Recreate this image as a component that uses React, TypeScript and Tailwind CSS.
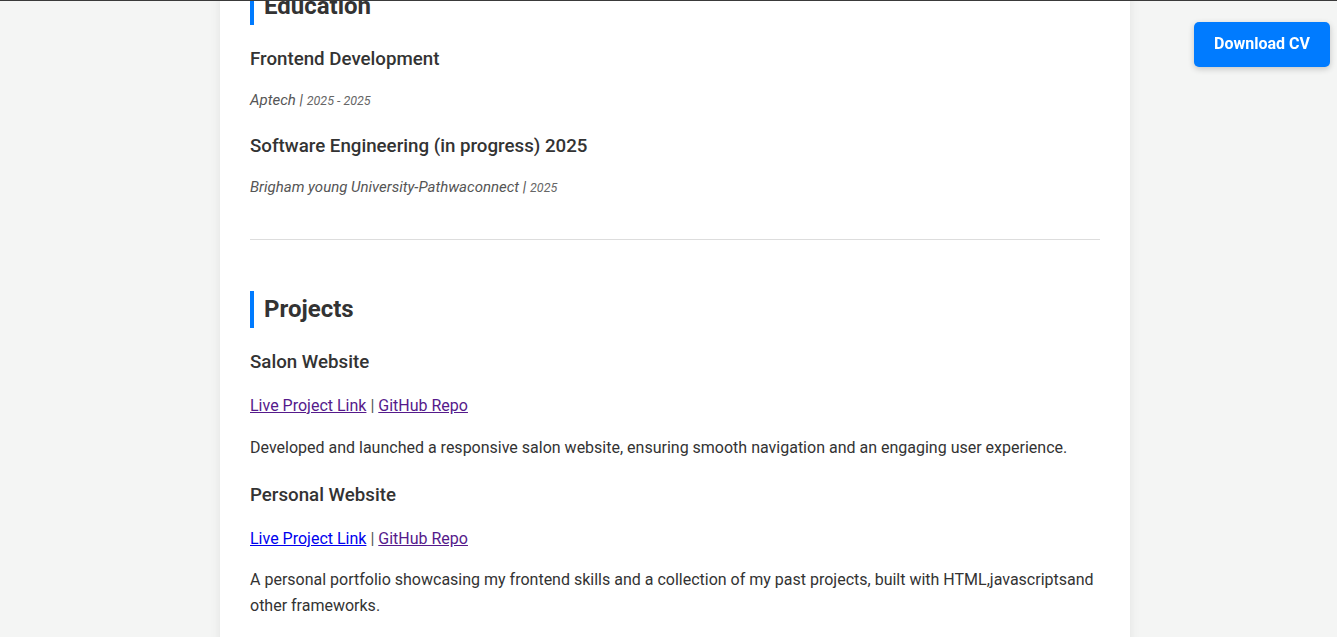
import React from 'react';

const education = [
  { title: 'Frontend Development', school: 'Aptech', date: '2025 - 2025' },
  { title: 'Software Engineering (in progress) 2025', school: 'Brigham young University-Pathwaconnect', date: '2025' },
];

const projects = [
  {
    title: 'Salon Website',
    liveVisited: true,
    text: 'Developed and launched a responsive salon website, ensuring smooth navigation and an engaging user experience.',
  },
  {
    title: 'Personal Website',
    liveVisited: false,
    text: 'A personal portfolio showcasing my frontend skills and a collection of my past projects, built with HTML,javascriptsand other frameworks.',
  },
];

function SectionTitle({ children }: { children: React.ReactNode }) {
  return (
    <h2 className="border-l-4 border-[#007bff] pl-[10px] text-[24px] font-bold leading-[37px] text-[#333]">
      {children}
    </h2>
  );
}

export default function App() {
  return (
    <div
      className="min-h-screen overflow-hidden bg-[#f4f5f4] text-[#333]"
      style={{ fontFamily: 'Roboto, "Liberation Sans", sans-serif' }}
    >
      {/* top edge */}
      <div className="fixed inset-x-0 top-0 z-20 h-px bg-[#3a3a3a]" />

      <main className="ml-[220px] mt-[-12px] w-[910px] bg-white px-[30px] pb-10 shadow-[0_0_10px_rgba(0,0,0,0.08)]">
        {/* Education */}
        <section>
          <SectionTitle>Education</SectionTitle>
          <div className="mt-[21px]">
            {education.map((e, i) => (
              <div key={e.title} className={i > 0 ? 'mt-[20px]' : ''}>
                <h3 className="text-[18.72px] font-medium leading-[27px] text-[#333]">{e.title}</h3>
                <p className="mt-[15px] text-[15px] italic leading-[24px] text-[#555]">
                  {e.school} | <span className="text-[12.5px] text-[#666]">{e.date}</span>
                </p>
              </div>
            ))}
          </div>
        </section>

        <hr className="mt-[39px] border-t border-[#ddd]" />

        {/* Projects */}
        <section className="mt-[51px]">
          <SectionTitle>Projects</SectionTitle>
          {projects.map((p, i) => (
            <div key={p.title} className="mt-[21px]">
              <h3 className="text-[18.72px] font-medium leading-[27px] text-[#333]">{p.title}</h3>
              <p className="mt-[17px] text-[16px] leading-[26px] text-[#555]">
                <a href="#" className={p.liveVisited ? 'text-[#551a8b] underline' : 'text-[#0000ee] underline'}>
                  Live Project Link
                </a>{' '}
                |{' '}
                <a href="#" className="text-[#551a8b] underline">
                  GitHub Repo
                </a>
              </p>
              <p className={i > 0 ? 'mt-[15px] text-[16px] leading-[26px] text-[#333]' : 'mt-[16px] text-[16px] leading-[26px] text-[#333]'}>
                {p.text}
              </p>
            </div>
          ))}
        </section>
      </main>

      <button className="fixed right-[7px] top-[22px] z-10 h-[45px] w-[136px] rounded-[5px] bg-[#007bff] pb-[2px] text-[16px] font-bold text-white shadow-[0_2px_6px_rgba(0,0,0,0.2)]">
        Download CV
      </button>
    </div>
  );
}
